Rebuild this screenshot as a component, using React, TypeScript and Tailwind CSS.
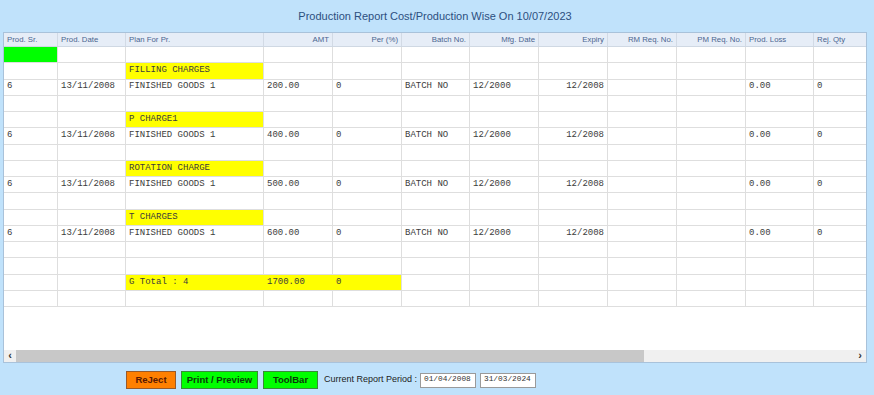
import React from "react";

const cols = [54, 68, 138, 69, 69, 68, 69, 69, 69, 69, 68, 69];

type Row =
  | { t: "green" }
  | { t: "label"; text: string }
  | { t: "data"; amt: string }
  | { t: "empty" }
  | { t: "total" };

const rows: Row[] = [
  { t: "green" },
  { t: "label", text: "FILLING CHARGES" },
  { t: "data", amt: "200.00" },
  { t: "empty" },
  { t: "label", text: "P CHARGE1" },
  { t: "data", amt: "400.00" },
  { t: "empty" },
  { t: "label", text: "ROTATION CHARGE" },
  { t: "data", amt: "500.00" },
  { t: "empty" },
  { t: "label", text: "T CHARGES" },
  { t: "data", amt: "600.00" },
  { t: "empty" },
  { t: "empty" },
  { t: "total" },
  { t: "empty" },
];

const headers: { text: string; right?: boolean }[] = [
  { text: "Prod. Sr." },
  { text: "Prod. Date" },
  { text: "Plan For Pr." },
  { text: "AMT", right: true },
  { text: "Per (%)", right: true },
  { text: "Batch No.", right: true },
  { text: "Mfg. Date", right: true },
  { text: "Expiry", right: true },
  { text: "RM Req. No.", right: true },
  { text: "PM Req. No.", right: true },
  { text: "Prod. Loss" },
  { text: "Rej. Qty" },
];

const gridCls =
  "grid grid-cols-[54px_68px_138px_69px_69px_68px_69px_69px_69px_69px_68px_69px] w-[880px]";

function Cell({
  children,
  right,
  bg,
  noBorderR,
}: {
  children?: React.ReactNode;
  right?: boolean;
  bg?: string;
  noBorderR?: boolean;
}) {
  return (
    <div
      className={
        "h-[16.28px] border-b border-[#dedede] flex items-center px-[3px] whitespace-nowrap overflow-hidden " +
        (noBorderR ? "" : "border-r ") +
        (right ? "justify-end " : "") +
        (bg === "yellow" ? "bg-[#ffff00] " : bg === "green" ? "bg-[#00ff00] " : "")
      }
    >
      {children}
    </div>
  );
}

function RowView({ r }: { r: Row }) {
  if (r.t === "green") {
    return (
      <div className={gridCls}>
        <Cell bg="green" />
        {cols.slice(1).map((_, i) => (
          <Cell key={i} />
        ))}
      </div>
    );
  }
  if (r.t === "label") {
    return (
      <div className={gridCls}>
        <Cell />
        <Cell />
        <Cell bg="yellow">{r.text}</Cell>
        {cols.slice(3).map((_, i) => (
          <Cell key={i} />
        ))}
      </div>
    );
  }
  if (r.t === "data") {
    return (
      <div className={gridCls}>
        <Cell>6</Cell>
        <Cell>13/11/2008</Cell>
        <Cell>FINISHED GOODS 1</Cell>
        <Cell>{r.amt}</Cell>
        <Cell>0</Cell>
        <Cell>BATCH NO</Cell>
        <Cell>12/2000</Cell>
        <Cell right>12/2008</Cell>
        <Cell />
        <Cell />
        <Cell>0.00</Cell>
        <Cell>0</Cell>
      </div>
    );
  }
  if (r.t === "total") {
    return (
      <div className={gridCls}>
        <Cell />
        <Cell />
        <Cell bg="yellow" noBorderR>
          G Total : 4
        </Cell>
        <Cell bg="yellow" noBorderR>
          1700.00
        </Cell>
        <Cell bg="yellow">0</Cell>
        {cols.slice(5).map((_, i) => (
          <Cell key={i} />
        ))}
      </div>
    );
  }
  return (
    <div className={gridCls}>
      {cols.map((_, i) => (
        <Cell key={i} />
      ))}
    </div>
  );
}

export default function App() {
  return (
    <div className="w-[874px] h-[395px] bg-[#c0e2fb] flex flex-col overflow-hidden font-['Liberation_Sans',Arial,sans-serif]">
      <div className="h-[32px] w-[870px] flex items-center justify-center text-[11px] text-[#2c4f80] pt-[1px]">
        Production Report Cost/Production Wise On 10/07/2023
      </div>
      <div className="ml-[3px] w-[864px] h-[331px] bg-white border border-[#a9c2da] flex flex-col">
        <div className="flex-1 overflow-hidden">
          <div className={gridCls + " bg-[#e6edf7] border-b border-[#cfd8e3]"}>
            {headers.map((h, i) => (
              <div
                key={i}
                className={
                  "h-[13px] border-r border-[#d2dae5] flex items-center px-[3px] text-[7.8px] text-[#4b6590] whitespace-nowrap " +
                  (h.right ? "justify-end" : "")
                }
              >
                {h.text}
              </div>
            ))}
          </div>
          <div className="font-['Liberation_Mono',monospace] text-[9px] text-[#3c3c3c]">
            {rows.map((r, i) => (
              <RowView key={i} r={r} />
            ))}
          </div>
        </div>
        <div className="h-[12px] flex bg-[#f0f0f0]">
          <div className="w-[12px] flex items-center justify-center text-[11px] font-bold text-[#333] leading-none pb-[1px]">
            ‹
          </div>
          <div className="w-[628px] bg-[#c8c8c8]" />
          <div className="flex-1" />
          <div className="w-[12px] flex items-center justify-center text-[11px] font-bold text-[#333] leading-none pb-[1px]">
            ›
          </div>
        </div>
      </div>
      <div className="mt-[8px] pl-[126px] flex items-center h-[18px]">
        <div className="w-[50px] h-[18px] bg-[#ff8000] border border-[#9a5a28] flex items-center justify-center text-[9.5px] font-bold text-[#5a1800]">
          ReJect
        </div>
        <div className="ml-[5px] w-[77px] h-[18px] bg-[#00ff00] border border-[#3a8a3a] flex items-center justify-center text-[9.5px] font-bold text-[#0a3a0a]">
          Print / Preview
        </div>
        <div className="ml-[5px] w-[55px] h-[18px] bg-[#00ff00] border border-[#3a8a3a] flex items-center justify-center text-[9.5px] font-bold text-[#0a3a0a]">
          ToolBar
        </div>
        <div className="ml-[6px] w-[91px] whitespace-nowrap text-[9px] text-[#222]">Current Report Period :</div>
        <div className="ml-[5px] w-[56px] h-[15px] bg-white border border-[#9a9a9a] flex items-center px-[3px] font-['Liberation_Mono',monospace] text-[7.8px] text-[#333]">
          01/04/2008
        </div>
        <div className="ml-[4px] w-[56px] h-[15px] bg-white border border-[#9a9a9a] flex items-center px-[3px] font-['Liberation_Mono',monospace] text-[7.8px] text-[#333]">
          31/03/2024
        </div>
      </div>
    </div>
  );
}
